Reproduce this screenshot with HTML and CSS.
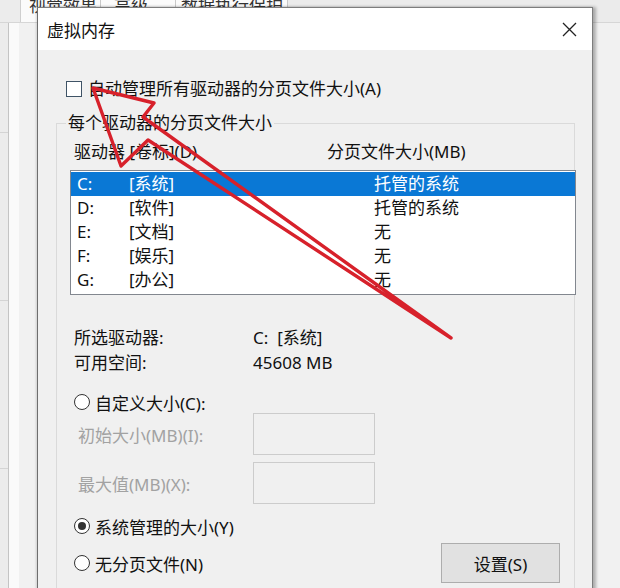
FILE: index.html
```html
<!DOCTYPE html>
<html lang="zh-CN">
<head>
<meta charset="utf-8">
<title>虚拟内存</title>
<link rel="stylesheet" href="styles.css">
</head>
<body>
<div class="screen">
  <div class="backdrop">
    <div class="tabs">
      <div class="tab-gap"></div>
      <div class="tab tab-1">视觉效果</div>
      <div class="tab tab-2">高级</div>
      <div class="tab tab-3">数据执行保护</div>
    </div>
    <div class="under">
      <div class="edge">
        <div class="edge-cell"></div>
        <div class="edge-cell"></div>
        <div class="edge-cell"></div>
        <div class="edge-cell"></div>
      </div>
      <div class="pane-light"></div>
      <div class="pane"></div>
    </div>
  </div>

  <div class="dialog">
    <div class="titlebar">
      <span class="title">虚拟内存</span>
      <span class="close">
        <svg width="15" height="15" viewBox="0 0 15 15"><path d="M1 1 L14 14 M14 1 L1 14" stroke="#222" stroke-width="1.3" fill="none"/></svg>
      </span>
    </div>
    <div class="body">
      <div class="check-row">
        <span class="checkbox"></span>
        <span class="check-label">自动管理所有驱动器的分页文件大小(A)</span>
      </div>
      <fieldset class="group">
        <legend class="group-label">每个驱动器的分页文件大小</legend>
        <div class="list-head">
          <span class="head-drive">驱动器 [卷标](D)</span>
          <span>分页文件大小(MB)</span>
        </div>
        <div class="listbox">
          <div class="row selected"><span>C:</span><span>[系统]</span><span>托管的系统</span></div>
          <div class="row"><span>D:</span><span>[软件]</span><span>托管的系统</span></div>
          <div class="row"><span>E:</span><span>[文档]</span><span>无</span></div>
          <div class="row"><span>F:</span><span>[娱乐]</span><span>无</span></div>
          <div class="row"><span>G:</span><span>[办公]</span><span>无</span></div>
        </div>
        <div class="info">
          <span>所选驱动器:</span><span>C:&nbsp; [系统]</span>
          <span>可用空间:</span><span>45608 MB</span>
        </div>
        <div class="radio-row first">
          <span class="radio"></span><span>自定义大小(C):</span>
        </div>
        <div class="size-row">
          <span class="disabled-label">初始大小(MB)(I):</span>
          <span class="textbox"></span>
        </div>
        <div class="size-row second">
          <span class="disabled-label">最大值(MB)(X):</span>
          <span class="textbox"></span>
        </div>
        <div class="radio-row managed">
          <span class="radio checked"></span><span>系统管理的大小(Y)</span>
        </div>
        <div class="bottom-row">
          <span class="radio"></span><span class="radio-text">无分页文件(N)</span>
          <span class="button">设置(S)</span>
        </div>
      </fieldset>
    </div>
  </div>

  <svg class="arrow" width="620" height="588" viewBox="0 0 620 588">
    <polygon points="93,88 154,103 143,117 451,338 148,140 121,166" fill="none" stroke="#d7212b" stroke-width="3.4" stroke-linejoin="round" stroke-linecap="round"/>
  </svg>
</div>
</body>
</html>
```

FILE: styles.css
```css
html, body {
  margin: 0;
  padding: 0;
  background: #f0f0f0;
}

.screen {
  position: relative;
  width: 620px;
  height: 588px;
  overflow: hidden;
  font-family: "Noto Sans", "Noto Sans CJK SC", sans-serif;
  font-size: 17px;
  color: #111;
}

/* ---------- parent window behind ---------- */
.backdrop {
  display: flex;
  flex-direction: column;
  height: 100%;
  background: #eeeeee;
}

.tabs {
  display: flex;
  height: 22px;
  flex-shrink: 0;
  background: #ebebeb;
  border-bottom: 1px solid #d6d6d6;
}

.tab-gap {
  width: 20px;
  background: #ececec;
  border-right: 1px solid #cfcfcf;
}

.tab {
  background: #fbfbfb;
  border-right: 1px solid #c9c9c9;
  line-height: 20px;
  margin-top: -4px;
  color: #333;
  white-space: nowrap;
  overflow: hidden;
  box-sizing: border-box;
}

.tab-1 { width: 80px; padding-left: 8px; }
.tab-2 { width: 75px; padding-left: 13px; }
.tab-3 { width: 112px; padding-left: 5px; }

.under {
  flex: 1;
  display: flex;
}

.edge {
  width: 8px;
  background: #ececec;
  border-right: 1px solid #c4c4c4;
  display: flex;
  flex-direction: column;
}

.edge-cell {
  height: 167px;
  border-bottom: 1px solid #d4d4d4;
  flex-shrink: 0;
}

.edge-cell:first-child {
  height: 109px;
}

.pane-light {
  width: 10px;
  background: #fafafa;
}

.pane {
  flex: 1;
  background: #f1f1f1;
}

/* ---------- dialog ---------- */
.dialog {
  position: absolute;
  left: 37px;
  top: 7px;
  width: 556px;
  height: 610px;
  box-sizing: border-box;
  border: 1px solid #7d7d7d;
  border-left-color: #6e6e6e;
  background: #f0f0f0;
  box-shadow: 3px 0 3px rgba(0, 0, 0, 0.28), -1px 0 2px rgba(0, 0, 0, 0.15);
  display: flex;
  flex-direction: column;
}

.titlebar {
  height: 42px;
  flex-shrink: 0;
  background: #ffffff;
  display: flex;
  align-items: center;
  padding-left: 9px;
}

.title {
  color: #111;
}

.close {
  margin-left: auto;
  width: 46px;
  height: 42px;
  display: flex;
  align-items: center;
  justify-content: center;
}

.body {
  padding: 0 17px 0 18px;
  display: flex;
  flex-direction: column;
}

.check-row {
  margin-top: 31px;
  height: 16px;
  display: flex;
  align-items: center;
  padding-left: 10px;
  white-space: nowrap;
}

.checkbox {
  width: 16px;
  height: 16px;
  box-sizing: border-box;
  border: 1px solid #3f5366;
  background: #ffffff;
  flex-shrink: 0;
}

.check-label {
  margin-left: 6px;
  line-height: 24px;
}

/* group box */
.group {
  margin: 14px 0 0 0;
  padding: 0 0 20px 0;
  border: 1px solid #dadada;
  min-width: 0;
}

.group-label {
  margin-left: 9px;
  padding: 0 2px;
  line-height: 24px;
}

.list-head {
  margin-top: 5px;
  padding-left: 17px;
  display: grid;
  grid-template-columns: 253px 1fr;
  line-height: 24px;
  white-space: nowrap;
}

.listbox {
  margin: 6px -2px 0 13px;
  border: 1px solid #82878f;
  background: #ffffff;
  padding: 1px 0 2px 0;
}

.row {
  display: grid;
  grid-template-columns: 52px 245px 1fr;
  height: 24px;
  line-height: 24px;
  padding-left: 6px;
  white-space: nowrap;
}

.row.selected {
  background: #0a78d5;
  color: #ffffff;
}

.info {
  margin-top: 30px;
  padding-left: 17px;
  display: grid;
  grid-template-columns: 179px 1fr;
  line-height: 25px;
  white-space: nowrap;
}

.radio-row {
  display: flex;
  align-items: center;
  height: 22px;
  padding-left: 17px;
  white-space: nowrap;
}

.radio-row.first {
  margin-top: 16px;
}

.radio-row.managed {
  margin-top: 11px;
}

.radio {
  width: 16px;
  height: 16px;
  box-sizing: border-box;
  border: 1px solid #333333;
  border-radius: 50%;
  background: #ffffff;
  margin-right: 5px;
  flex-shrink: 0;
  display: flex;
  align-items: center;
  justify-content: center;
}

.radio.checked::after {
  content: "";
  width: 8px;
  height: 8px;
  border-radius: 50%;
  background: #333333;
}

.size-row {
  display: grid;
  grid-template-columns: 175px 122px;
  align-items: center;
  padding-left: 21px;
  height: 42px;
}

.size-row.second {
  margin-top: 7px;
}

.disabled-label {
  color: #a2a2a2;
  white-space: nowrap;
}

.textbox {
  height: 42px;
  box-sizing: border-box;
  border: 1px solid #cccccc;
  background: #f0f0f0;
}

.bottom-row {
  margin-top: 6px;
  display: flex;
  align-items: center;
  padding-left: 17px;
  padding-right: 14px;
  white-space: nowrap;
}

.button {
  margin-left: auto;
  width: 119px;
  height: 40px;
  box-sizing: border-box;
  border: 1px solid #adadad;
  background: #e1e1e1;
  display: flex;
  align-items: center;
  justify-content: center;
}

/* annotation arrow over everything */
.arrow {
  position: absolute;
  left: 0;
  top: 0;
  pointer-events: none;
}
```
